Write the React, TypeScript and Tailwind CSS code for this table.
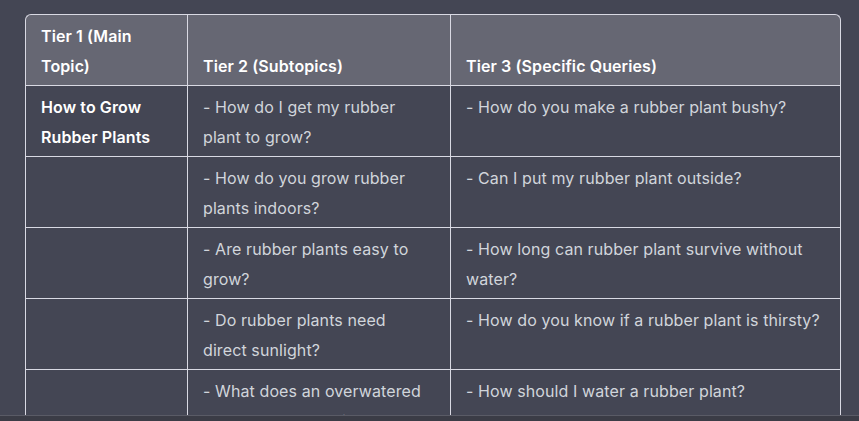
import React from "react";

const rows: [string, string, string][] = [
  ["How to Grow Rubber Plants", "- How do I get my rubber plant to grow?", "- How do you make a rubber plant bushy?"],
  ["", "- How do you grow rubber plants indoors?", "- Can I put my rubber plant outside?"],
  ["", "- Are rubber plants easy to grow?", "- How long can rubber plant survive without water?"],
  ["", "- Do rubber plants need direct sunlight?", "- How do you know if a rubber plant is thirsty?"],
  ["", "- What does an overwatered rubber plant look like?", "- How should I water a rubber plant?"],
];

export default function App() {
  return (
    <div
      className="w-[859px] h-[421px] bg-[#444654] relative overflow-hidden"
      style={{ fontFamily: 'Inter, "Liberation Sans", Arial, sans-serif' }}
    >
      <div className="h-[415px] overflow-hidden pl-[25px] pt-[14px]">
        <table className="border-separate border-spacing-0 table-fixed w-[816px] text-[16px] leading-[30px] tracking-[0.1px]">
          <colgroup>
            <col className="w-[162px]" />
            <col className="w-[263px]" />
            <col className="w-[391px]" />
          </colgroup>
          <thead>
            <tr>
              <th className="bg-[#666773] text-white font-semibold text-left align-bottom pl-[15px] pr-[17px] pt-[6px] pb-[4px] border-t border-l border-[#d9d9e3] rounded-tl-[6px]">
                Tier 1 (Main Topic)
              </th>
              <th className="bg-[#666773] text-white font-semibold text-left align-bottom pl-[15px] pr-[17px] pt-[6px] pb-[4px] border-t border-l border-[#d9d9e3]">
                Tier 2 (Subtopics)
              </th>
              <th className="bg-[#666773] text-white font-semibold text-left align-bottom pl-[15px] pr-[17px] pt-[6px] pb-[4px] border-t border-l border-r border-[#d9d9e3] rounded-tr-[6px]">
                Tier 3 (Specific Queries)
              </th>
            </tr>
          </thead>
          <tbody>
            {rows.map((r, i) => (
              <tr key={i}>
                <td className="align-top pl-[15px] pr-[17px] pt-[6px] pb-[4px] h-[71px] border-t border-l border-[#d9d9e3] text-white font-semibold">
                  {r[0]}
                </td>
                <td className="align-top pl-[15px] pr-[17px] pt-[6px] pb-[4px] border-t border-l border-[#d9d9e3] text-[#d1d5db]">
                  {r[1]}
                </td>
                <td className="align-top pl-[15px] pr-[17px] pt-[6px] pb-[4px] border-t border-l border-r border-[#d9d9e3] text-[#d1d5db]">
                  {r[2]}
                </td>
              </tr>
            ))}
          </tbody>
        </table>
      </div>
      <div className="h-[6px] bg-[#3b3c46] border-t border-[#5a5b66]" />
    </div>
  );
}
